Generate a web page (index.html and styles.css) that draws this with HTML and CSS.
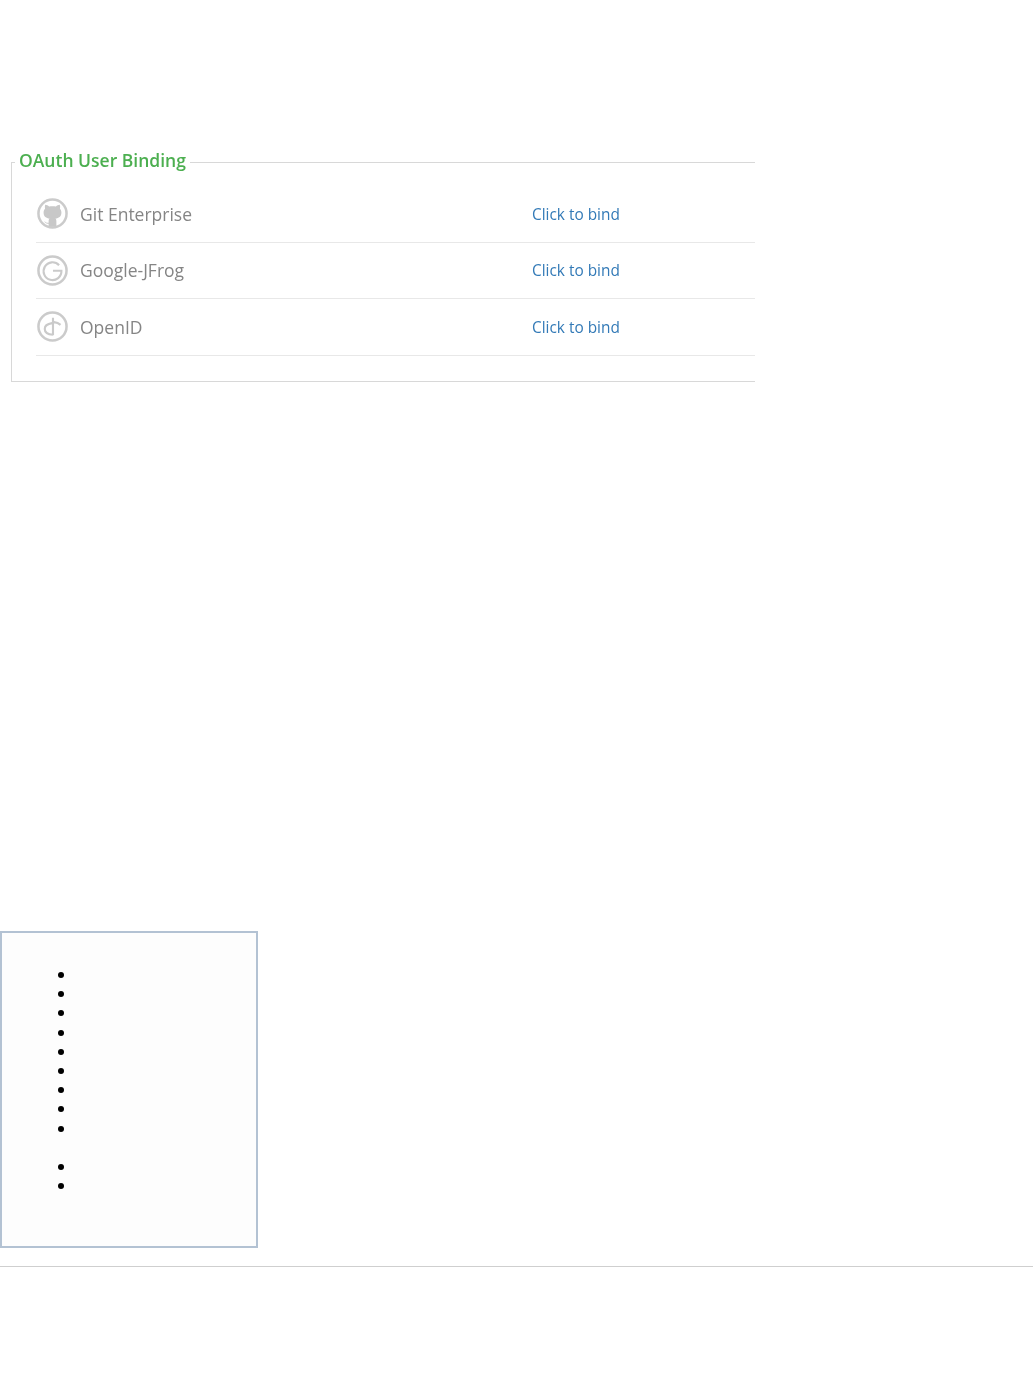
FILE: index.html
```html
<!DOCTYPE html>
<html lang="en">
<head>
<meta charset="utf-8">
<title>OAuth User Binding</title>
<link rel="stylesheet" href="styles.css">
</head>
<body>
<main class="main">
  <fieldset class="binding">
    <legend class="binding-title">OAuth User Binding</legend>
    <div class="row">
      <svg class="icon" viewBox="0 0 32 32" aria-hidden="true">
        <circle class="ring" cx="16" cy="16" r="14.5"/>
        <path class="solid" d="M8.500 7c1.400.1 2.900.8 4 1.700 2.200-.4 4.800-.4 7 0 1.100-.9 2.600-1.600 4-1.700.5 1.300.5 2.700.2 4 1 1.100 1.500 2.400 1.500 3.900 0 4.300-2.800 5.900-6.200 6.300.8.700 1 1.600 1 2.800v4.900c-1.100.5-2.600.8-4 .8s-2.900-.3-4-.8v-2.400c-2.300.3-3.600-.5-4.500-2.400.9.300 1.500 1.500 2.800 1.500h1.700v-1.600c0-1.200.2-2.100 1-2.800-3.400-.4-6.200-2-6.200-6.300 0-1.500.5-2.800 1.500-3.900-.3-1.300-.3-2.700.2-4z"/>
      </svg>
      <span class="name">Git Enterprise</span>
      <a class="bind" href="#">Click to bind</a>
    </div>
    <div class="row">
      <svg class="icon" viewBox="0 0 32 32" aria-hidden="true">
        <circle class="ring" cx="16" cy="16" r="14.5"/>
        <path class="line" d="M22.800 10.500A9.200 9.200 0 1 0 25.200 16.300H16.500"/>
      </svg>
      <span class="name">Google-JFrog</span>
      <a class="bind" href="#">Click to bind</a>
    </div>
    <div class="row">
      <svg class="icon" viewBox="0 0 32 32" aria-hidden="true">
        <circle class="ring" cx="16" cy="16" r="14.5"/>
        <path class="line" d="M16.500 7V25M15.500 12.500C11 13.200 8 15.500 8 18.500c0 3.200 3.300 5.600 8.500 6M17.500 11.500c2.800.3 5 1.200 6.800 2.800"/>
      </svg>
      <span class="name">OpenID</span>
      <a class="bind" href="#">Click to bind</a>
    </div>
  </fieldset>

  <aside class="menu-box">
    <ul class="menu-list">
      <li></li><li></li><li></li><li></li><li></li><li></li><li></li><li></li><li></li>
    </ul>
    <ul class="menu-list">
      <li></li><li></li>
    </ul>
  </aside>
</main>
<footer class="footer"></footer>
</body>
</html>
```
FILE: styles.css
```css
* {
  box-sizing: border-box;
}

html,
body {
  margin: 0;
  background: #fff;
}

body {
  min-height: 1392px;
  font-family: "Open Sans", "Liberation Sans", sans-serif;
}

.main {
  padding-top: 149px;
  filter: blur(0.35px);
}

.binding {
  width: 744px;
  height: 233px;
  margin: 0 0 0 11px;
  padding: 11px 0 0 24px;
  border: 1px solid #d8d8d8;
  border-right: 0;
  min-inline-size: 0;
}

.binding-title {
  margin-left: -21px;
  padding: 0 4px 4px;
  font-size: 17.5px;
  font-weight: 600;
  line-height: 22px;
  color: #4caf50;
}

.row {
  display: grid;
  grid-template-columns: 44px 452px 1fr;
  align-items: center;
  height: 56.5px;
  border-bottom: 1px solid #e8e8e8;
}

.icon {
  display: block;
  width: 31px;
  height: 31px;
  margin-left: 0.6px;
}

.ring {
  fill: none;
  stroke: #cbcbcb;
  stroke-width: 2.6;
}

.solid {
  fill: #c8c8c8;
}

.line {
  fill: none;
  stroke: #cacaca;
  stroke-width: 2.2;
}

.name {
  font-size: 17.5px;
  color: #858585;
}

.bind {
  margin-top: 1px;
  font-size: 15.4px;
  color: #337ab7;
  text-decoration: none;
}

.menu-box {
  width: 258px;
  height: 317px;
  margin-top: 549px;
  padding: 32px 0 0;
  border: 2px solid #b3c2d3;
  background: #fdfdfd;
}

.menu-list {
  margin: 0 0 19.2px;
  padding: 0 0 0 75px;
  font-family: "Liberation Serif", serif;
  font-size: 20px;
  line-height: 19.2px;
  color: #000;
}

.menu-list li {
  height: 19.2px;
}

.footer {
  margin-top: 18px;
  border-top: 1px solid #cfcfcf;
}
```
